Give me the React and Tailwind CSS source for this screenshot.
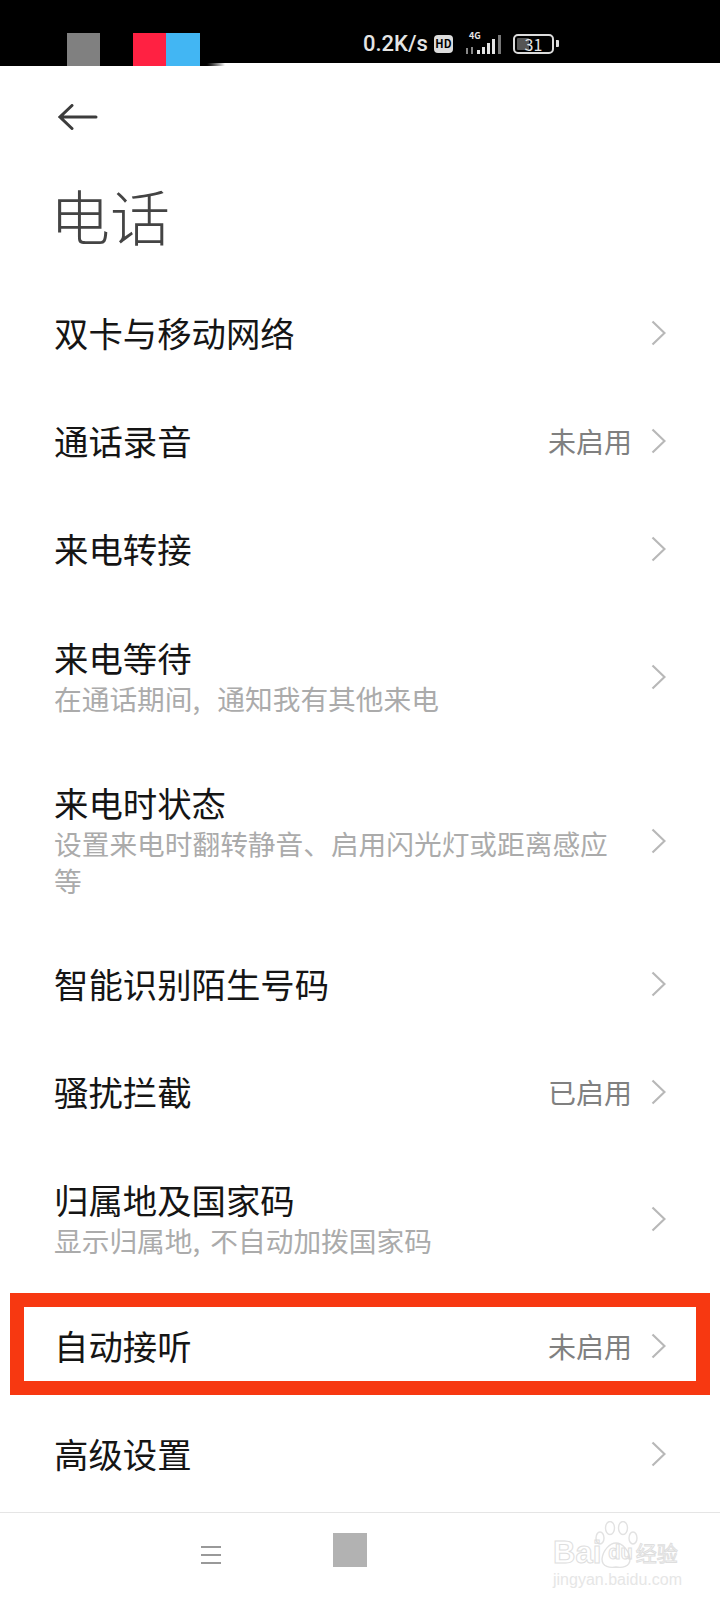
const cjk = { fontFamily: '"Noto Sans CJK SC", "Noto Sans", sans-serif' };
const latin = { fontFamily: '"Liberation Sans", sans-serif' };

function Chevron() {
  return (
    <svg width="15" height="26" viewBox="0 0 15 26" fill="none" className="ml-[19px] shrink-0">
      <path d="M1.5 1.5 L13.5 13 L1.5 24.5" stroke="#b8b8b8" strokeWidth="2.2" />
    </svg>
  );
}

function Row({ title, sub, value, height = "h-[108px]" }) {
  return (
    <div className={`flex items-center pl-[54px] pr-[54px] ${height}`}>
      <div className="flex-1 min-w-0 pb-[2px]">
        <div className="text-[34.4px] leading-[42px] text-[#151515]">{title}</div>
        {sub && <div className="text-[27.7px] leading-[37px] text-[#ababab] mt-[2px] pr-[2px]">{sub}</div>}
      </div>
      {value && <div className="text-[28px] text-[#808080] leading-none">{value}</div>}
      <Chevron />
    </div>
  );
}

function StatusBar() {
  return (
    <div className="flex h-[66px] bg-white">
      <div className="flex w-[205px] h-[66px] bg-black pl-[67px] pt-[33px] items-start">
        <div className="w-[33px] h-[33px] bg-[#808080]" />
        <div className="w-[33px] h-[33px] bg-[#ff2142] ml-[33px]" />
        <div className="w-[34px] h-[33px] bg-[#42b6f3]" />
      </div>
      <div className="relative flex-1 h-[63px] bg-black flex items-center pl-[158px] pt-[24px] text-[#e4e4e4]">
        <div className="absolute left-0 top-[63px] w-[20px] h-[3px] bg-gradient-to-r from-black to-white" />
        <span className="text-[22px] font-medium leading-none" style={{ fontFamily: "Roboto, sans-serif" }}>
          0.2K/s
        </span>
        <div className="ml-[6px] w-[19px] h-[18px] rounded-[4px] bg-[#dcdcdc] text-black text-[11px] font-bold flex items-center justify-center leading-none">
          HD
        </div>
        <div className="relative ml-[13px] w-[38px] h-[22px]">
          <span className="absolute left-[3px] top-[-2px] text-[9px] font-bold leading-none text-[#e4e4e4]">4G</span>
          <svg width="38" height="22" viewBox="0 0 38 22" className="absolute left-0 top-0">
            <rect x="0" y="15" width="2" height="6" fill="#888" />
            <rect x="5" y="14" width="2" height="7" fill="#888" />
            <rect x="11" y="17" width="3" height="4" fill="#e4e4e4" />
            <rect x="16" y="14" width="3" height="7" fill="#e4e4e4" />
            <rect x="21" y="10" width="3" height="11" fill="#e4e4e4" />
            <rect x="26" y="6" width="3" height="15" fill="#e4e4e4" />
            <rect x="32" y="2" width="3" height="19" fill="#777" />
          </svg>
        </div>
        <div className="relative ml-[9px] w-[41px] h-[20px] rounded-[5px] border-2 border-[#dcdcdc] flex items-center p-[2px]">
          <div className="w-[12px] h-full bg-[#555] rounded-[1px]" />
          <span className="absolute inset-0 flex items-center justify-center text-[16px] leading-none text-[#e4e4e4]">31</span>
        </div>
        <div className="ml-[2px] w-[3px] h-[7px] bg-[#dcdcdc] rounded-r-[1px]" />
      </div>
    </div>
  );
}

function Watermark() {
  return (
    <div className="absolute left-[553px] top-[8px] w-[130px] select-none">
      <svg width="46" height="50" viewBox="0 0 46 50" fill="none" stroke="#e2e2e2" strokeWidth="1.4" className="absolute left-[40px] top-0">
        <ellipse cx="7" cy="17" rx="4" ry="6" />
        <ellipse cx="17" cy="7" rx="4.5" ry="6.5" />
        <ellipse cx="30" cy="7" rx="4.5" ry="6.5" />
        <ellipse cx="40" cy="17" rx="4" ry="6" />
        <path d="M9 38c1-9 8-16 14-16s13 7 14 16c0 8-8 9-14 8-6 1-14 0-14-8z" />
      </svg>
      <div className="relative pt-[17px] flex items-center h-[45px] leading-none text-transparent [-webkit-text-stroke:1px_#dedede]">
        <span className="text-[31px] font-bold" style={latin}>Bai</span>
        <span className="text-[20px] font-bold ml-[7px]" style={latin}>du</span>
        <span className="text-[21px] ml-[3px]" style={cjk}>经验</span>
      </div>
      <div className="text-[16px] leading-none mt-[6px] text-[#e6e6e6]" style={latin}>
        jingyan.baidu.com
      </div>
    </div>
  );
}

export default function App() {
  return (
    <div className="w-[720px] h-[1600px] bg-white overflow-hidden flex flex-col" style={cjk}>
      <StatusBar />
      <div className="h-[213px] pl-[58px] pt-[38px]">
        <svg width="40" height="26" viewBox="0 0 40 26" fill="none" stroke="#3c3c3c" strokeWidth="3" strokeLinecap="round">
          <path d="M38 13 H2 M14 1.5 L2 13 L14 24.5" />
        </svg>
        <div className="text-[60px] font-light leading-none text-[#444] mt-[55px] ml-[-8px]">电话</div>
      </div>
      <Row title="双卡与移动网络" />
      <Row title="通话录音" value="未启用" />
      <Row title="来电转接" />
      <Row
        title="来电等待"
        sub={<>在通话期间,<span className="ml-[11px]"> 通知我有其他来电</span></>}
        height="h-[148px]"
      />
      <Row title="来电时状态" sub="设置来电时翻转静音、启用闪光灯或距离感应等" height="h-[179px]" />
      <Row title="智能识别陌生号码" />
      <Row title="骚扰拦截" value="已启用" />
      <Row
        title="归属地及国家码"
        sub={<>显示归属地,<span className="ml-[4px]"> 不自动加拨国家码</span></>}
        height="h-[146px]"
      />
      <div className="relative">
        <Row title="自动接听" value="未启用" />
        <div className="absolute left-[10px] right-[10px] top-[1px] h-[102px] border-[14px] border-[#f73811]" />
      </div>
      <Row title="高级设置" />
      <div className="relative mt-[4px] flex-1 border-t border-[#e5e5e5]">
        <div className="flex items-start pl-[201px] pt-[33px]">
          <div className="w-[20px] flex flex-col gap-[6px]">
            <div className="h-[2px] bg-[#999]" />
            <div className="h-[2px] bg-[#999]" />
            <div className="h-[2px] bg-[#999]" />
          </div>
          <div className="w-[34px] h-[34px] bg-[#b2b2b2] ml-[112px] -mt-[13px]" />
        </div>
        <Watermark />
      </div>
    </div>
  );
}
